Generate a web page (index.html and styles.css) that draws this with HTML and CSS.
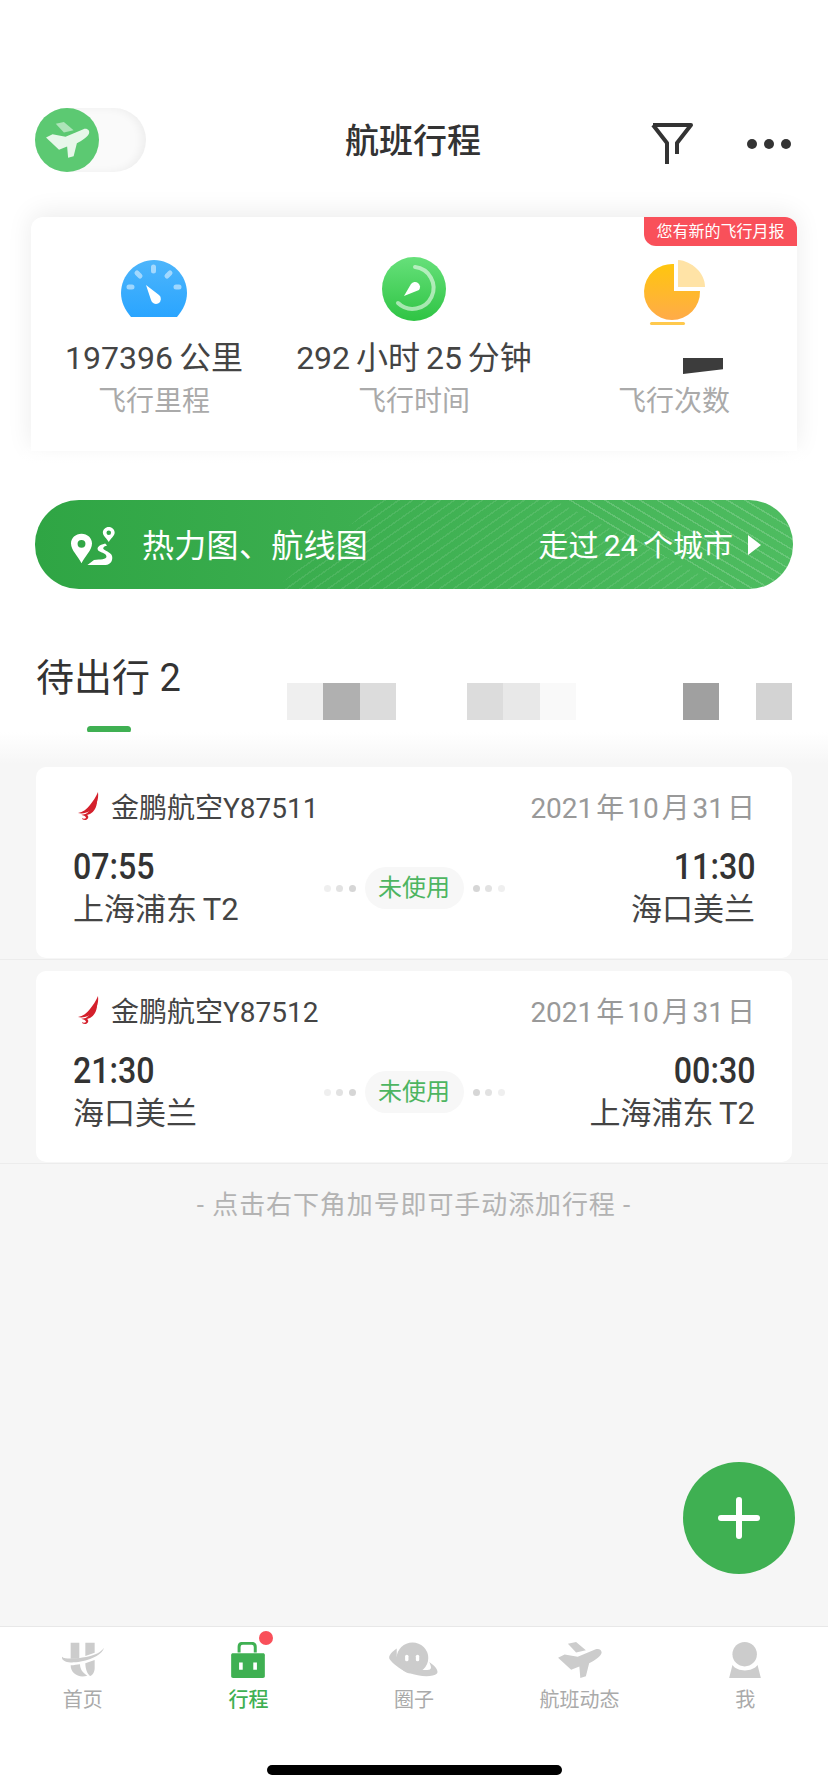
FILE: index.html
```html
<!DOCTYPE html>
<html lang="zh-CN">

<head>
    <meta charset="UTF-8">
    <meta name="viewport" content="width=device-width, initial-scale=1.0">
    <title>航班行程</title>
    <link rel="stylesheet" href="styles.css">
</head>

<body>
    <div class="page">
        <header class="topbar">
            <div class="toggle">
                <div class="toggle-knob">
                    <svg viewBox="0 0 64 64" width="64" height="64">
                        <g transform="translate(11 14) scale(0.325)">
                            <path d="M30 5L55 0L85 25L55 32Z" fill="#ffffff" opacity="0.5" />
                            <path d="M0 48L20 38L60 45L115 22C128 18 136 28 132 36C128 46 110 58 95 65L85 105L68 110L65 75L40 85Z" fill="#ffffff" opacity="0.85" />
                        </g>
                    </svg>
                </div>
            </div>
            <h1 class="title">航班行程</h1>
            <div class="topbar-actions">
                <svg class="filter-icon" viewBox="0 0 42 42" width="42" height="42">
                    <path d="M2 3H40L26 21V32M2 3L16 21V42" fill="none" stroke="#333" stroke-width="4" stroke-linejoin="round" />
                </svg>
                <div class="dots"><i></i><i></i><i></i></div>
            </div>
        </header>

        <section class="stats-card">
            <div class="badge">您有新的飞行月报</div>
            <div class="stats">
                <div class="stat">
                    <svg class="stat-icon" viewBox="0 0 66 66" width="66" height="66">
                        <defs>
                            <linearGradient id="blue" x1="0" y1="0" x2="0" y2="1">
                                <stop offset="0" stop-color="#4db5fb" />
                                <stop offset="1" stop-color="#2aa5ff" />
                            </linearGradient>
                        </defs>
                        <path d="M10 59C4 52 0 44 0 35 0 17 15 2 33 2s33 15 33 33c0 9-4 17-10 24z" fill="url(#blue)" />
                        <g stroke="#ffffff" stroke-opacity="0.5" stroke-width="5" stroke-linecap="round">
                            <path d="M32.5 9v4M16 15l3 3M49 15l-3 3M8 29h3M58 29h-3" />
                        </g>
                        <path d="M25 27l13 10a5 5 0 1 1-8 5z" fill="#ffffff" />
                    </svg>
                    <div class="stat-value">197396 公里</div>
                    <div class="stat-label">飞行里程</div>
                </div>
                <div class="stat">
                    <svg class="stat-icon" viewBox="0 0 66 66" width="66" height="66">
                        <defs>
                            <linearGradient id="green" x1="0" y1="0" x2="0" y2="1">
                                <stop offset="0" stop-color="#66e07a" />
                                <stop offset="1" stop-color="#2fc444" />
                            </linearGradient>
                        </defs>
                        <circle cx="33" cy="31" r="32" fill="url(#green)" />
                        <path d="M34 9a21 21 0 1 1-17 36" fill="none" stroke="#ffffff" stroke-opacity="0.55" stroke-width="4" stroke-linecap="round" />
                        <path d="M23 38l7-12a5 5 0 1 1 8 6z" fill="#ffffff" />
                    </svg>
                    <div class="stat-value">292 小时 25 分钟</div>
                    <div class="stat-label">飞行时间</div>
                </div>
                <div class="stat">
                    <svg class="stat-icon stat-icon-pie" viewBox="0 0 66 66" width="66" height="66">
                        <defs>
                            <linearGradient id="orange" x1="0" y1="0" x2="0" y2="1">
                                <stop offset="0" stop-color="#ffc60e" />
                                <stop offset="1" stop-color="#ffab49" />
                            </linearGradient>
                        </defs>
                        <path d="M30 6v27h26A28 28 0 1 1 30 6z" fill="url(#orange)" />
                        <path d="M34 2c14 1 27 13 27 27H34z" fill="#ffe3a6" />
                        <rect x="6" y="64" width="35" height="3" rx="1.5" fill="#ffc94d" />
                    </svg>
                    <div class="stat-value stat-hidden"><span class="smudge"></span></div>
                    <div class="stat-label">飞行次数</div>
                </div>
            </div>
        </section>

        <a class="route-banner">
            <svg class="route-icon" viewBox="0 0 134 115" width="44" height="38">
                <path fill-rule="evenodd" d="M32 20C14 20 0 33 0 50c0 20 22 40 32 60 10-20 32-40 32-60 0-17-14-30-32-30zm0 19a12 12 0 1 1 0 24 12 12 0 0 1 0-24z" fill="#ffffff" />
                <path fill-rule="evenodd" d="M115 0c-10 0-18 8-18 17 0 9 12 18 18 28 6-10 18-19 18-28 0-9-8-17-18-17zm0 10a7 7 0 1 1 0 14 7 7 0 0 1 0-14z" fill="#ffffff" />
                <path d="M104 50C85 55 78 62 82 70 86 78 108 78 108 90 108 98 90 98 70 100L50 115H105C122 115 128 100 125 88 122 75 100 72 98 65 98 60 104 58 110 56Z" fill="#ffffff" />
            </svg>
            <span class="route-text">热力图、航线图</span>
            <span class="route-cities">走过 24 个城市</span>
            <span class="route-arrow"></span>
        </a>

        <nav class="tabs">
            <div class="tab-current">
                <span class="tab-name">待出行 2</span>
                <span class="tab-line"></span>
            </div>
            <div class="mosaic">
                <i class="m-light"></i><i class="m-dark"></i><i class="m-mid"></i>
            </div>
            <div class="mosaic">
                <i class="m-mid"></i><i class="m-soft"></i><i class="m-faint"></i>
            </div>
            <div class="mosaic">
                <i class="m-darker"></i><i class="m-none"></i><i class="m-grey"></i>
            </div>
        </nav>

        <main class="content">
            <div class="trip-row">
                <article class="trip">
                    <div class="trip-head">
                        <svg class="airline-logo" viewBox="0 0 22 28" width="22" height="28">
                            <path d="M21 0c1 8-2 15-8 19-4 2-8 3-12 2 5-1 9-4 12-8 3-4 6-8 8-13z" fill="#d4202c" />
                            <path d="M20 9c0 6-3 11-7 13-2 1-4 1-6 1 4-2 9-7 13-14z" fill="#d4202c" />
                            <path d="M4 23c3-1 6-1 7 1 1 2-1 4-3 4-2 0-3-1-3-2 1 1 3 1 4 0 0-2-3-3-5-3z" fill="#d4202c" />
                        </svg>
                        <span class="airline">金鹏航空Y87511</span>
                        <span class="date">2021 年 10 月 31 日</span>
                    </div>
                    <div class="trip-body">
                        <div class="place">
                            <div class="time">07:55</div>
                            <div class="airport">上海浦东 T2</div>
                        </div>
                        <div class="state">
                            <div class="state-dots"><i></i><i></i><i></i></div>
                            <span class="pill">未使用</span>
                            <div class="state-dots state-dots-out"><i></i><i></i><i></i></div>
                        </div>
                        <div class="place place-end">
                            <div class="time">11:30</div>
                            <div class="airport">海口美兰</div>
                        </div>
                    </div>
                </article>
            </div>
            <div class="trip-row">
                <article class="trip">
                    <div class="trip-head">
                        <svg class="airline-logo" viewBox="0 0 22 28" width="22" height="28">
                            <path d="M21 0c1 8-2 15-8 19-4 2-8 3-12 2 5-1 9-4 12-8 3-4 6-8 8-13z" fill="#d4202c" />
                            <path d="M20 9c0 6-3 11-7 13-2 1-4 1-6 1 4-2 9-7 13-14z" fill="#d4202c" />
                            <path d="M4 23c3-1 6-1 7 1 1 2-1 4-3 4-2 0-3-1-3-2 1 1 3 1 4 0 0-2-3-3-5-3z" fill="#d4202c" />
                        </svg>
                        <span class="airline">金鹏航空Y87512</span>
                        <span class="date">2021 年 10 月 31 日</span>
                    </div>
                    <div class="trip-body">
                        <div class="place">
                            <div class="time">21:30</div>
                            <div class="airport">海口美兰</div>
                        </div>
                        <div class="state">
                            <div class="state-dots"><i></i><i></i><i></i></div>
                            <span class="pill">未使用</span>
                            <div class="state-dots state-dots-out"><i></i><i></i><i></i></div>
                        </div>
                        <div class="place place-end">
                            <div class="time">00:30</div>
                            <div class="airport">上海浦东 T2</div>
                        </div>
                    </div>
                </article>
            </div>
            <p class="hint">- 点击右下角加号即可手动添加行程 -</p>
            <button class="fab"><span class="fab-plus"></span></button>
        </main>

        <footer class="tabbar">
            <div class="tabbar-items">
                <div class="tabbar-item">
                    <svg viewBox="0 0 126 104" width="42" height="35">
                        <path d="M26 0h26v48H26zM70 0h28v30L70 40z" fill="#cccccc" />
                        <path d="M0 42c-2 14 18 18 36 17 34-2 84-18 90-44-8 12-24 22-54 28-26 5-64 8-72-1z" fill="#cccccc" />
                        <path d="M26 68c10 0 20-2 28-3 0 14 8 26 22 34-26 8-50-6-50-31zM70 62l28-10v24c0 12-6 22-14 24-10-8-14-24-14-38z" fill="#cccccc" />
                    </svg>
                    <span>首页</span>
                </div>
                <div class="tabbar-item tabbar-active">
                    <svg viewBox="0 0 102 109" width="34" height="36">
                        <path d="M24 32V15C24 8 28 4 35 4H62C69 4 73 8 73 15V32" fill="none" stroke="#3fb052" stroke-width="9" />
                        <path d="M6 34H96C100 34 102 36 102 40V103C102 107 100 109 96 109H6C2 109 0 107 0 103V40C0 36 2 34 6 34Z" fill="#3fb052" />
                        <rect x="24" y="62" width="11" height="22" fill="#ffffff" />
                        <rect x="67" y="62" width="11" height="22" fill="#ffffff" />
                    </svg>
                    <i class="red-dot"></i>
                    <span>行程</span>
                </div>
                <div class="tabbar-item">
                    <svg viewBox="0 0 146 104" width="49" height="35">
                        <ellipse cx="70" cy="46" rx="47" ry="46" fill="#cccccc" />
                        <path d="M23 18C5 30-3 42 2 50 10 62 30 78 60 92L70 80C45 70 25 55 23 40Z" fill="#cccccc" />
                        <path d="M60 90C90 102 130 104 143 92 148 84 140 72 120 58 124 68 128 76 122 80 108 84 90 82 70 76Z" fill="#cccccc" />
                        <rect x="48" y="36" width="10" height="20" rx="5" fill="#ffffff" />
                        <rect x="80" y="36" width="10" height="20" rx="5" fill="#ffffff" />
                    </svg>
                    <span>圈子</span>
                </div>
                <div class="tabbar-item">
                    <svg viewBox="0 0 134 110" width="44" height="36">
                        <path d="M30 5L55 0L85 25L55 32Z" fill="#cccccc" />
                        <path d="M0 48L20 38L60 45L115 22C128 18 136 28 132 36C128 46 110 58 95 65L85 105L68 110L65 75L40 85Z" fill="#cccccc" />
                    </svg>
                    <span>航班动态</span>
                </div>
                <div class="tabbar-item">
                    <svg viewBox="0 0 96 109" width="32" height="36">
                        <circle cx="47" cy="37" r="37" fill="#cccccc" />
                        <path d="M0 109L10 70C25 92 70 92 86 70L96 109Z" fill="#cccccc" />
                    </svg>
                    <span>我</span>
                </div>
            </div>
            <div class="home-indicator"></div>
        </footer>
    </div>
</body>

</html>
```

FILE: styles.css
```css
* {
    box-sizing: border-box;
}

body {
    margin: 0;
    background-color: #fff;
    font-family: Roboto, "Noto Sans CJK SC", sans-serif;
    color: #333;
}

.page {
    position: relative;
    display: flex;
    flex-direction: column;
    width: 828px;
    height: 1792px;
    overflow: hidden;
}

/* top bar */
.topbar {
    display: flex;
    align-items: center;
    height: 64px;
    margin-top: 108px;
    padding: 0 37px 0 35px;
}

.toggle {
    width: 111px;
    height: 64px;
    border-radius: 32px;
    background-color: #fafafa;
    box-shadow: inset -4px 0 8px rgba(0, 0, 0, 0.05);
}

.toggle-knob {
    width: 64px;
    height: 64px;
    border-radius: 50%;
    background-color: #5cc972;
}

.toggle-knob svg {
    display: block;
}

.title {
    flex: 1;
    margin: 0 0 4px 199px;
    font-size: 34px;
    font-weight: 500;
    color: #333;
}

.topbar-actions {
    display: flex;
    align-items: center;
    gap: 54px;
}

.filter-icon {
    display: block;
    margin-top: 5px;
}

.dots {
    display: flex;
    gap: 7px;
    margin-top: 8px;
}

.dots i {
    width: 10px;
    height: 10px;
    border-radius: 50%;
    background-color: #333;
}

/* stats card */
.stats-card {
    position: relative;
    height: 234px;
    margin: 45px 31px 0;
    border-radius: 12px 12px 0 0;
    background-color: #fff;
    box-shadow: 0 -4px 26px rgba(0, 0, 0, 0.08);
}

.stats-card::after {
    content: "";
    position: absolute;
    left: -40px;
    right: -40px;
    top: 228px;
    height: 40px;
    background: linear-gradient(rgba(255, 255, 255, 0), #fff 50%);
}

.badge {
    position: absolute;
    top: 0;
    right: 0;
    width: 153px;
    height: 29px;
    border-radius: 0 12px 0 12px;
    background-color: #f9505a;
    color: #fff;
    font-size: 16px;
    line-height: 29px;
    text-align: center;
}

.stats {
    display: grid;
    grid-template-columns: repeat(3, 1fr);
    margin: 0 -7px;
    padding-top: 41px;
}

.stat {
    display: flex;
    flex-direction: column;
    align-items: center;
}

.stat-icon {
    display: block;
    overflow: visible;
}

.stat-icon-pie {
    margin-left: 6px;
}

.stat-value {
    height: 46px;
    margin-top: 11px;
    font-size: 32px;
    line-height: 46px;
    word-spacing: -2px;
    white-space: nowrap;
    color: #444;
}

.stat-hidden {
    width: 100%;
    display: flex;
    justify-content: center;
}

.smudge {
    width: 40px;
    height: 16px;
    margin: 23px 0 0 58px;
    background-color: #3c3c3c;
    clip-path: polygon(0 0, 100% 0, 100% 70%, 0 100%);
}

.stat-label {
    margin-top: 1px;
    font-size: 28px;
    line-height: 40px;
    color: #aaa;
}

/* heat map banner */
.route-banner {
    position: relative;
    display: flex;
    align-items: center;
    height: 89px;
    margin: 49px 35px 0;
    padding: 0 32px 0 36px;
    border-radius: 44px;
    overflow: hidden;
    color: #fff;
    background: linear-gradient(90deg, #2fa544, #4ebc60);
}

.route-banner::before,
.route-banner::after {
    content: "";
    position: absolute;
    left: 0;
    top: 0;
    right: 0;
    bottom: 0;
}

.route-banner::before {
    background: repeating-linear-gradient(145deg, rgba(255, 255, 255, 0.09) 0 1.5px, transparent 1.5px 8px);
    clip-path: polygon(345px 0, 519px 0, 693px 100%, 240px 100%);
}

.route-banner::after {
    background: repeating-linear-gradient(31deg, rgba(255, 255, 255, 0.16) 0 1.5px, transparent 1.5px 9px);
    clip-path: polygon(519px 0, 100% 0, 100% 100%, 693px 100%);
}

.route-icon {
    position: relative;
    z-index: 1;
    flex: none;
    margin-top: 3px;
}

.route-text {
    position: relative;
    z-index: 1;
    margin: 0 0 4px 27px;
    font-size: 32px;
    letter-spacing: 0.3px;
}

.route-cities {
    position: relative;
    z-index: 1;
    margin: 0 0 4px auto;
    font-size: 30px;
    word-spacing: -2px;
}

.route-arrow {
    position: relative;
    z-index: 1;
    margin-left: 15px;
    border-left: 13px solid #fff;
    border-top: 10px solid transparent;
    border-bottom: 10px solid transparent;
}

/* tabs */
.tabs {
    position: relative;
    display: flex;
    height: 143px;
    padding: 0 36px 0 36px;
    align-items: flex-start;
}

.tab-current {
    display: flex;
    flex-direction: column;
    margin-top: 62px;
    width: 253px;
}

.tab-name {
    font-size: 38px;
    line-height: 54px;
    color: #333;
}

.tab-line {
    width: 44px;
    height: 7px;
    margin: 21px 0 0 51px;
    border-radius: 4px;
    background-color: #3fb052;
}

.mosaic {
    display: flex;
    flex: none;
    width: 109px;
    height: 37px;
    margin-top: 94px;
    margin-right: 71px;
}

.mosaic:last-child {
    margin-right: 0;
    margin-left: 36px;
}

.mosaic i {
    flex: 1;
}

.m-light { background-color: #efefef; }
.m-dark { background-color: #b0b0b0; }
.m-mid { background-color: #dcdcdc; }
.m-soft { background-color: #e8e8e8; }
.m-faint { background-color: #f9f9f9; }
.m-darker { background-color: #a0a0a0; }
.m-none { background-color: #fff; }
.m-grey { background-color: #d3d3d3; }

/* trips */
.content {
    position: relative;
    flex: 1;
    background: linear-gradient(#fff, #f6f6f6 32px);
}

.trip-row {
    padding: 11px 36px 1px;
    border-bottom: 1px solid #ececec;
}

.trip-row:first-child {
    padding-top: 35px;
}

.trip {
    height: 191px;
    padding: 19px 37px 0 37px;
    border-radius: 10px;
    background-color: #fff;
}

.trip-head {
    display: flex;
    align-items: center;
    height: 40px;
}

.airline-logo {
    flex: none;
    margin-left: 4px;
}

.airline {
    margin-left: 12px;
    font-size: 28px;
    color: #444;
}

.date {
    margin-left: auto;
    font-size: 28px;
    word-spacing: -4px;
    color: #999;
}

.trip-body {
    display: flex;
    align-items: center;
    margin-top: 19px;
}

.place {
    flex: 1;
}

.place-end {
    text-align: right;
}

/* the digits in the reference are narrower than any installed bold */
.time {
    font-size: 37px;
    font-weight: 500;
    line-height: 44px;
    color: #333;
    transform: scaleX(0.87);
    transform-origin: left center;
}

.place-end .time {
    transform-origin: right center;
}

.airport {
    font-size: 31px;
    line-height: 42px;
    word-spacing: -2px;
    color: #444;
}

.state {
    display: flex;
    align-items: center;
    gap: 9px;
}

.state-dots {
    display: flex;
    gap: 5.5px;
}

.state-dots i {
    width: 7px;
    height: 7px;
    border-radius: 50%;
    background-color: #d6d6d6;
}

.state-dots i:first-child { opacity: 0.4; }
.state-dots i:nth-child(2) { opacity: 0.7; }
.state-dots-out i:first-child { opacity: 1; }
.state-dots-out i:last-child { opacity: 0.4; }

.pill {
    width: 99px;
    height: 42px;
    border-radius: 21px;
    background-color: #f7f7f7;
    color: #4db561;
    font-size: 24px;
    line-height: 42px;
    text-align: center;
}

.hint {
    margin: 23px 0 0;
    font-size: 26px;
    line-height: 36px;
    letter-spacing: 0.9px;
    text-align: center;
    color: #b3b3b3;
}

.fab {
    position: absolute;
    right: 33px;
    bottom: 52px;
    width: 112px;
    height: 112px;
    border: none;
    border-radius: 50%;
    background-color: #3fb052;
}

.fab-plus {
    position: absolute;
    left: 35px;
    top: 53px;
    width: 42px;
    height: 6px;
    border-radius: 3px;
    background-color: #fff;
}

.fab-plus::after {
    content: "";
    position: absolute;
    left: 18px;
    top: -18px;
    width: 6px;
    height: 42px;
    border-radius: 3px;
    background-color: #fff;
}

/* tab bar */
.tabbar {
    height: 166px;
    border-top: 1px solid #e8e8e8;
    background-color: #fff;
}

.tabbar-items {
    display: grid;
    grid-template-columns: repeat(5, 1fr);
    padding-top: 15px;
}

.tabbar-item {
    position: relative;
    display: flex;
    flex-direction: column;
    align-items: center;
    height: 73px;
    font-size: 20px;
    line-height: 28px;
    color: #aaa;
}

.tabbar-item svg {
    display: block;
    flex: none;
    height: 36px;
    margin-bottom: 8px;
}

.tabbar-active {
    color: #3fb052;
    font-weight: 500;
}

.red-dot {
    position: absolute;
    left: 93px;
    top: -11px;
    width: 14px;
    height: 14px;
    border-radius: 50%;
    background-color: #f9505a;
}

.home-indicator {
    width: 295px;
    height: 10px;
    margin: 50px auto 0;
    border-radius: 5px;
    background-color: #000;
}
```
